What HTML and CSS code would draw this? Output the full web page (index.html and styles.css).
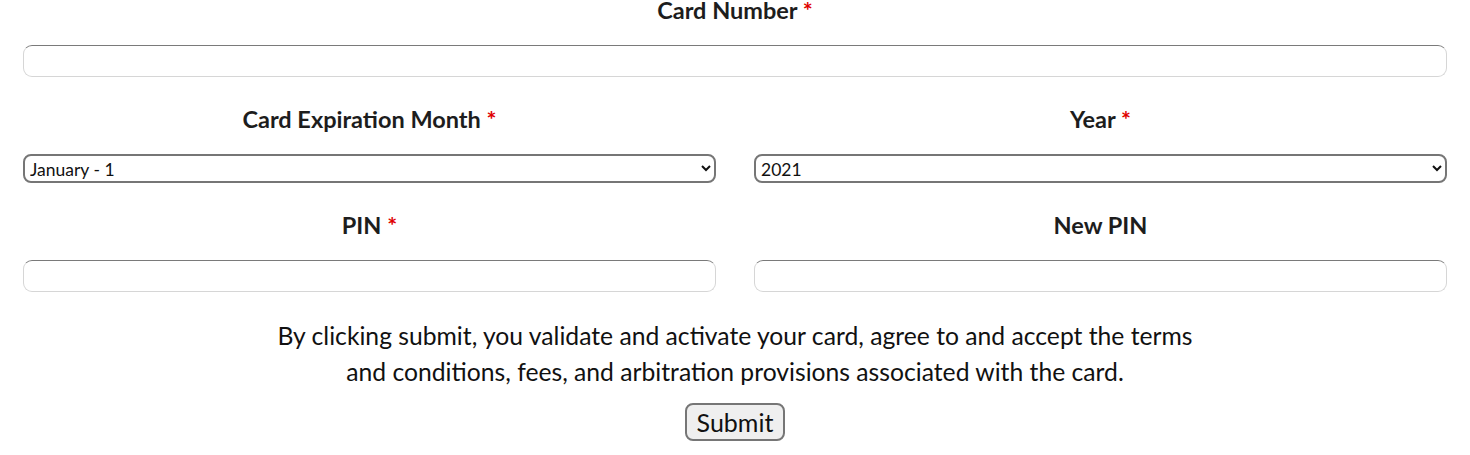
FILE: index.html
```html
<!DOCTYPE html>
<html lang="en">
<head>
<meta charset="utf-8">
<title>Activate Card</title>
<link rel="stylesheet" href="styles.css">
</head>
<body>
<form class="form">
  <div class="field">
    <label class="label label-first" for="card">Card Number <span class="req">*</span></label>
    <input class="input" id="card" type="text">
  </div>
  <div class="row">
    <div class="field">
      <label class="label" for="month">Card Expiration Month <span class="req">*</span></label>
      <select class="select" id="month">
        <option>January - 1</option>
      </select>
    </div>
    <div class="field">
      <label class="label" for="year">Year <span class="req">*</span></label>
      <select class="select" id="year">
        <option>2021</option>
      </select>
    </div>
  </div>
  <div class="row">
    <div class="field">
      <label class="label" for="pin">PIN <span class="req">*</span></label>
      <input class="input" id="pin" type="text">
    </div>
    <div class="field">
      <label class="label" for="newpin">New PIN</label>
      <input class="input" id="newpin" type="text">
    </div>
  </div>
  <p class="terms">By clicking submit, you validate and activate your card, agree to and accept the terms and conditions, fees, and arbitration provisions associated with the card.</p>
  <div class="actions">
    <button class="submit" type="button">Submit</button>
  </div>
</form>
</body>
</html>
```
FILE: styles.css
```css
html, body {
  margin: 0;
  padding: 0;
  background: #fff;
}
body {
  font-family: Lato, "Open Sans", sans-serif;
  color: #1a1a1a;
  overflow: hidden;
}
.form {
  padding: 0 23px;
  display: flex;
  flex-direction: column;
}
.row {
  display: grid;
  grid-template-columns: 1fr 1fr;
  column-gap: 38px;
}
.field {
  display: flex;
  flex-direction: column;
  padding-bottom: 28px;
}
.label {
  display: block;
  text-align: center;
  font-size: 23.5px;
  font-weight: 700;
  line-height: 29px;
  margin-bottom: 20px;
  color: #1d1d1d;
}
.label-first {
  line-height: 20px;
  margin-bottom: 25px;
}
.req {
  color: #e00000;
}
.input {
  box-sizing: border-box;
  width: 100%;
  height: 32px;
  margin: 0;
  padding: 0 6px;
  font: 16px Lato, sans-serif;
  background: #fff;
  border: 1px solid #d6d6d6;
  border-top-color: #7a7a7a;
  border-radius: 9px;
  outline: none;
}
.select {
  box-sizing: border-box;
  width: 100%;
  height: 29px;
  margin: 0;
  padding: 1px 1px 0;
  font: 17.5px Lato, sans-serif;
  color: #111;
  background: #fff;
  border: 2px solid #767676;
  border-radius: 8px;
}
.terms {
  max-width: 940px;
  margin: -2px auto 13px;
  text-align: center;
  font-size: 24.7px;
  line-height: 36px;
  color: #111;
}
.actions {
  display: flex;
  justify-content: center;
}
.submit {
  box-sizing: border-box;
  width: 100px;
  height: 38px;
  padding: 0;
  font: 25px Lato, sans-serif;
  color: #111;
  background: #efefef;
  border: 2px solid #767676;
  border-radius: 8px;
}
```
